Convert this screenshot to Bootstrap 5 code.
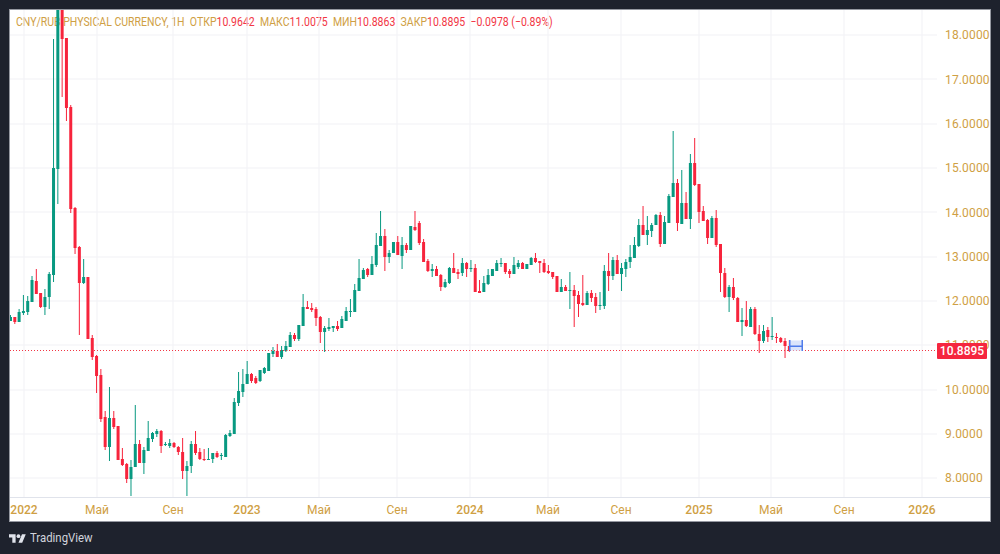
<!DOCTYPE html>
<html lang="ru">
<head>
<meta charset="utf-8">
<title>CNY/RUB Chart</title>
<link href="https://cdn.jsdelivr.net/npm/bootstrap@5.3.0/dist/css/bootstrap.min.css" rel="stylesheet">
<style>
html,body{height:100%;}
body{background:#1e222d;font-family:Roboto,"Liberation Sans",sans-serif;font-size:12px;color:#cfa044;overflow:hidden;}
.tv-page{width:1000px;height:554px;padding:9px 9px 0;}
.tv-frame{width:982px;height:513px;background:#fff;border:1px solid #9598a1;flex:none;}
.tv-top{height:487px;}
.tv-plot{width:927px;height:487px;}
.tv-plot svg{display:block;position:relative;z-index:1;}
.tv-legend{left:6px;top:5px;height:14px;line-height:14px;white-space:nowrap;z-index:0;transform:scaleX(.875);transform-origin:left center;}
.tv-legend b{font-weight:400;color:#f23645;}
.tv-legend .tv-gap{margin-left:6px;}
.tv-price{width:53px;padding-top:3.2px;padding-left:8px;}
.tv-price div{height:44.33px;line-height:44.33px;letter-spacing:.15px;}
.tv-lastprice{left:927px;top:332.5px;width:50px;height:16px;line-height:16px;background:#f5263f;color:#fff;text-align:center;border-radius:1px;font-weight:500;z-index:2;}
.tv-time{height:24px;border-top:1px solid #e0e3eb;}
.tv-time span{top:0;line-height:24px;transform:translateX(-50%);}
.tv-foot{height:32px;color:#d1d4dc;font-size:13px;}
.tv-foot svg{width:17px;height:9px;}
.tv-brand{display:inline-block;transform:scaleX(.875);transform-origin:left center;}
</style>
</head>
<body>
<div class="tv-page d-flex flex-column">
  <div class="tv-frame d-flex flex-column">
    <div class="tv-top d-flex position-relative">
      <div class="tv-plot position-relative">
        <div class="tv-legend position-absolute">CNY/RUB:PHYSICAL CURRENCY, 1H<span class="tv-gap">ОТКР</span><b>10.9642</b><span class="tv-gap">МАКС</span><b>11.0075</b><span class="tv-gap">МИН</span><b>10.8863</b><span class="tv-gap">ЗАКР</span><b>10.8895</b><b class="tv-gap">−0.0978 (−0.89%)</b></div>
        <svg id="tvchart" width="927" height="487" viewBox="10 10 927 487" xmlns="http://www.w3.org/2000/svg"></svg>
      </div>
      <div class="tv-price d-flex flex-column">
        <div>18.0000</div><div>17.0000</div><div>16.0000</div><div>15.0000</div><div>14.0000</div><div>13.0000</div><div>12.0000</div><div>11.0000</div><div>10.0000</div><div>9.0000</div><div>8.0000</div>
      </div>
      <div class="tv-lastprice position-absolute">10.8895</div>
    </div>
    <div class="tv-time position-relative" id="tvtime"></div>
  </div>
  <div class="tv-foot d-flex align-items-center gap-1">
    <svg viewBox="0 0 36 18" xmlns="http://www.w3.org/2000/svg"><path fill="#e0e3eb" d="M14 18H7V7H0V0h14v18zM28 18h-8L27.5 0h8L28 18z"/><circle fill="#e0e3eb" cx="20" cy="4" r="4"/></svg>
    <span class="tv-brand">TradingView</span>
  </div>
</div>
<script>
var D="g315,317,321,321|r317,317,322,324|g309,312,322,322|g295,311,313,315|g296,301,312,315|g276,280,302,302|r269,281,294,294|r293,293,307,308|g289,297,307,315|g272,274,297,309|g39,168,275,282|g0,0,169,204|r0,0,39,97|r38,38,108,121|r105,107,209,213|r207,208,248,254|r246,247,283,335|g259,277,283,284|r277,277,339,339|r335,338,357,360|r355,356,376,393|r369,375,419,422|r411,417,447,450|g387,418,447,461|r411,418,427,429|r426,426,460,460|r448,459,465,466|r463,464,479,483|g460,467,479,496|g405,444,467,467|r440,444,463,463|g447,450,463,474|g421,438,451,451|g432,433,439,442|g429,431,434,437|r430,431,446,453|g442,444,445,446|g439,443,446,448|r442,443,447,448|r446,447,452,455|r438,452,471,479|g461,466,471,496|g441,444,466,473|r431,444,453,455|r448,452,459,460|r449,459,460,461|g448,459,460,460|g453,453,459,463|r451,453,457,458|g453,455,456,460|g434,435,457,457|g430,433,436,437|g398,402,434,434|g372,391,403,406|g369,384,392,397|g361,374,384,384|r373,374,381,383|r376,378,383,384|g370,370,381,382|g367,368,373,374|g353,353,371,371|g347,351,354,357|r344,351,357,357|g346,350,357,359|g341,346,351,352|g332,335,347,347|r333,335,339,341|g325,325,339,341|g294,307,326,326|r301,307,309,309|r303,308,310,312|r307,309,318,326|r316,317,332,343|g326,328,332,352|g318,327,329,331|g326,326,328,332|r321,326,329,331|g316,319,328,328|g307,311,321,321|g299,311,312,317|g284,290,312,312|g259,278,291,291|g268,270,279,279|r268,269,275,277|g256,264,275,275|g233,245,265,267|g211,236,246,246|r229,236,257,271|g250,253,257,263|g242,242,253,253|r236,242,255,255|g237,245,256,269|r243,245,250,253|g226,226,250,250|r211,227,230,231|r221,223,243,245|r239,242,262,262|r259,261,271,272|g264,269,271,277|r266,269,276,276|r274,275,287,291|g279,282,287,288|g267,268,283,284|r253,268,273,273|r269,272,274,279|g258,263,273,276|r262,263,269,277|g260,268,269,272|r264,268,292,292|r280,291,293,293|g276,283,292,292|g269,275,284,285|g269,269,276,276|g260,263,271,271|g258,263,264,267|r263,263,272,274|r269,271,274,278|g257,265,274,274|g260,263,267,269|r262,263,269,269|g264,264,269,269|g257,258,265,265|r253,258,262,263|r261,261,263,273|r259,263,272,273|r265,271,273,274|r272,272,277,279|r276,276,292,292|g279,287,292,292|r285,287,291,291|g272,290,291,309|r285,290,296,327|r291,295,304,317|r275,303,305,306|g291,293,305,305|r290,293,298,302|r293,297,306,313|g292,305,306,310|g265,271,306,309|r253,271,276,291|g257,260,276,280|r255,260,274,274|g263,268,274,291|g259,262,269,277|g245,257,262,268|g237,245,258,258|g219,225,246,247|r206,225,235,235|g216,230,235,245|g223,225,231,237|g214,215,225,225|r212,215,244,247|g216,222,244,244|g194,196,223,223|g131,183,197,197|r179,183,223,231|g170,203,224,224|r192,203,219,219|g154,163,219,229|r138,163,185,186|r184,184,212,223|r206,211,221,221|r219,220,238,244|g216,218,238,238|r210,218,245,247|r244,244,273,292|r268,273,297,298|g285,287,297,312|r278,287,298,300|r297,298,322,322|g308,320,322,336|r301,320,326,327|g307,309,327,327|r307,309,334,335|r325,334,341,353|g325,331,341,343|r327,330,337,342|g317,336,337,340|r333,337,338,343|r337,338,342,343|r338,341,346,358|r340,346,351,352".split("|");
var NS="http://www.w3.org/2000/svg",s=document.getElementById("tvchart");
function rect(x,y,w,h,f){var r=document.createElementNS(NS,"rect");r.setAttribute("x",x);r.setAttribute("y",y);r.setAttribute("width",w);r.setAttribute("height",h);r.setAttribute("fill",f);s.appendChild(r);}
var GX=[24,97,173,247,319,397,470,548,621,699,771,844,922],G="#f1f2f5";
for(var i=0;i<11;i++)rect(10,Math.round(35+44.33*i)-.5,927,1,G);
GX.forEach(function(x){rect(x-.5,10,1,487,G);});
D.forEach(function(c,i){var t=c[0],a=c.slice(1).split(",").map(Number),col=t=="g"?"#089981":"#f7243c",x=10.5+4.303*i;
 rect(x-.5,a[0],1,a[3]-a[0],col);
 rect(x-1.5,a[1],3,Math.max(1,a[2]-a[1]),col);});
var l=document.createElementNS(NS,"line");l.setAttribute("x1",10);l.setAttribute("x2",937);l.setAttribute("y1",350.5);l.setAttribute("y2",350.5);l.setAttribute("stroke","#f23645");l.setAttribute("stroke-width",1);l.setAttribute("stroke-dasharray","1 2");s.appendChild(l);
rect(789.5,340.5,13,10,"#dbe5fb");
rect(789,340,1.5,11,"#4f7ceb");rect(801.5,340,1.5,11,"#4f7ceb");rect(789,345.5,13,1.5,"#4f7ceb");
var T=["2022","Май","Сен","2023","Май","Сен","2024","Май","Сен","2025","Май","Сен","2026"],tt=document.getElementById("tvtime");
T.forEach(function(t,i){var e=document.createElement("span");e.className="position-absolute";e.textContent=t;e.style.left=(GX[i]-10)+"px";if(i%3==0)e.style.fontWeight=500;tt.appendChild(e);});
</script>
<script src="https://cdn.jsdelivr.net/npm/bootstrap@5.3.0/dist/js/bootstrap.bundle.min.js"></script>
</body>
</html>
